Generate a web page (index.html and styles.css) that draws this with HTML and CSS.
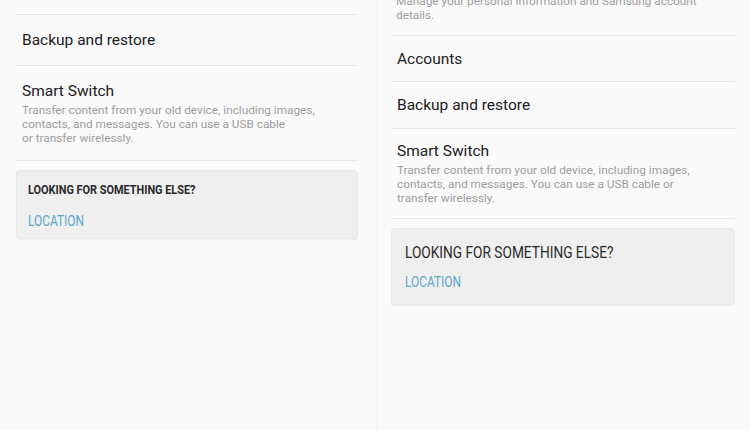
FILE: index.html
```html
<!DOCTYPE html>
<html>
<head>
<meta charset="utf-8">
<link rel="stylesheet" href="styles.css">
</head>
<body>
<div class="screen">
  <section class="panel panel-left">
    <div class="stub stub-left"></div>
    <div class="row row-simple"><span class="title">Backup and restore</span></div>
    <div class="row row-detail">
      <div class="title">Smart Switch</div>
      <div class="desc">Transfer content from your old device, including images,<br>contacts, and messages. You can use a USB cable<br>or transfer wirelessly.</div>
    </div>
    <div class="card">
      <div class="card-head"><span class="squeeze">LOOKING FOR SOMETHING ELSE?</span></div>
      <div class="card-link"><span class="squeeze">LOCATION</span></div>
    </div>
  </section>
  <section class="panel panel-right">
    <div class="stub stub-right">
      <div class="desc">Manage your personal information and Samsung account<br>details.</div>
    </div>
    <div class="row row-simple"><span class="title">Accounts</span></div>
    <div class="row row-simple row-b"><span class="title">Backup and restore</span></div>
    <div class="row row-detail">
      <div class="title">Smart Switch</div>
      <div class="desc">Transfer content from your old device, including images,<br>contacts, and messages. You can use a USB cable or<br>transfer wirelessly.</div>
    </div>
    <div class="card">
      <div class="card-head"><span class="squeeze">LOOKING FOR SOMETHING ELSE?</span></div>
      <div class="card-link"><span class="squeeze">LOCATION</span></div>
    </div>
  </section>
</div>
</body>
</html>
```

FILE: styles.css
```css
html, body {
  margin: 0;
  padding: 0;
  background: #fafafa;
}
body {
  font-family: "Roboto", "Liberation Sans", sans-serif;
  color: #262626;
}
.screen {
  display: flex;
  width: 750px;
  height: 430px;
  overflow: hidden;
}
.panel {
  box-sizing: border-box;
  height: 430px;
  display: flex;
  flex-direction: column;
}
.panel-left {
  width: 378px;
  padding: 0 19px 0 16px;
  border-right: 1px solid #efefef;
}
.panel-right {
  flex: 1;
  padding: 0 15px 0 13px;
}
.stub, .row {
  border-bottom: 1px solid #e7e7e7;
  flex: none;
}
.stub-left {
  height: 14px;
}
.stub-right {
  box-sizing: border-box;
  height: 36px;
  padding: 0 5px 13px;
  display: flex;
  flex-direction: column;
  justify-content: flex-end;
  overflow: hidden;
}
.row-simple {
  box-sizing: border-box;
  display: flex;
  align-items: center;
  padding: 0 6px;
}
.panel-left .row-simple { height: 51px; }
.panel-right .row-simple { height: 46px; }
.panel-right .row-b { height: 47px; }
.title {
  font-size: 15.5px;
  line-height: 20px;
  color: #202020;
}
.desc {
  font-size: 11.8px;
  line-height: 14px;
  color: #9d9d9d;
}
.row-detail .desc {
  margin-top: 2px;
}
.row-detail {
  padding: 0 6px;
}
.panel-left .row-detail {
  padding-top: 15px;
  padding-bottom: 15px;
}
.panel-right .row-detail {
  padding-top: 12px;
  padding-bottom: 13px;
}
.card {
  background: #efefef;
  border: 1px solid #e8e8e8;
  border-radius: 4px;
  box-shadow: 0 1px 1px rgba(0,0,0,0.04);
}
.squeeze {
  display: inline-block;
  transform: scaleX(0.82);
  transform-origin: left center;
  white-space: nowrap;
}
.card-head {
  color: #2a2a2a;
}
.card-link {
  color: #5aa7c6;
  font-size: 14.5px;
  line-height: 14px;
}
.panel-left .card {
  margin-top: 9px;
  padding: 12px 11px 9px;
}
.panel-left .card-head {
  font-size: 13.3px;
  font-weight: 700;
  line-height: 14px;
}
.panel-left .card-link {
  margin-top: 18px;
}
.panel-right .card {
  margin-top: 9px;
  padding: 15px 13px 14px;
}
.panel-right .card-head {
  font-size: 16.7px;
  line-height: 18px;
}
.panel-right .card-link {
  margin-top: 14px;
}
```
